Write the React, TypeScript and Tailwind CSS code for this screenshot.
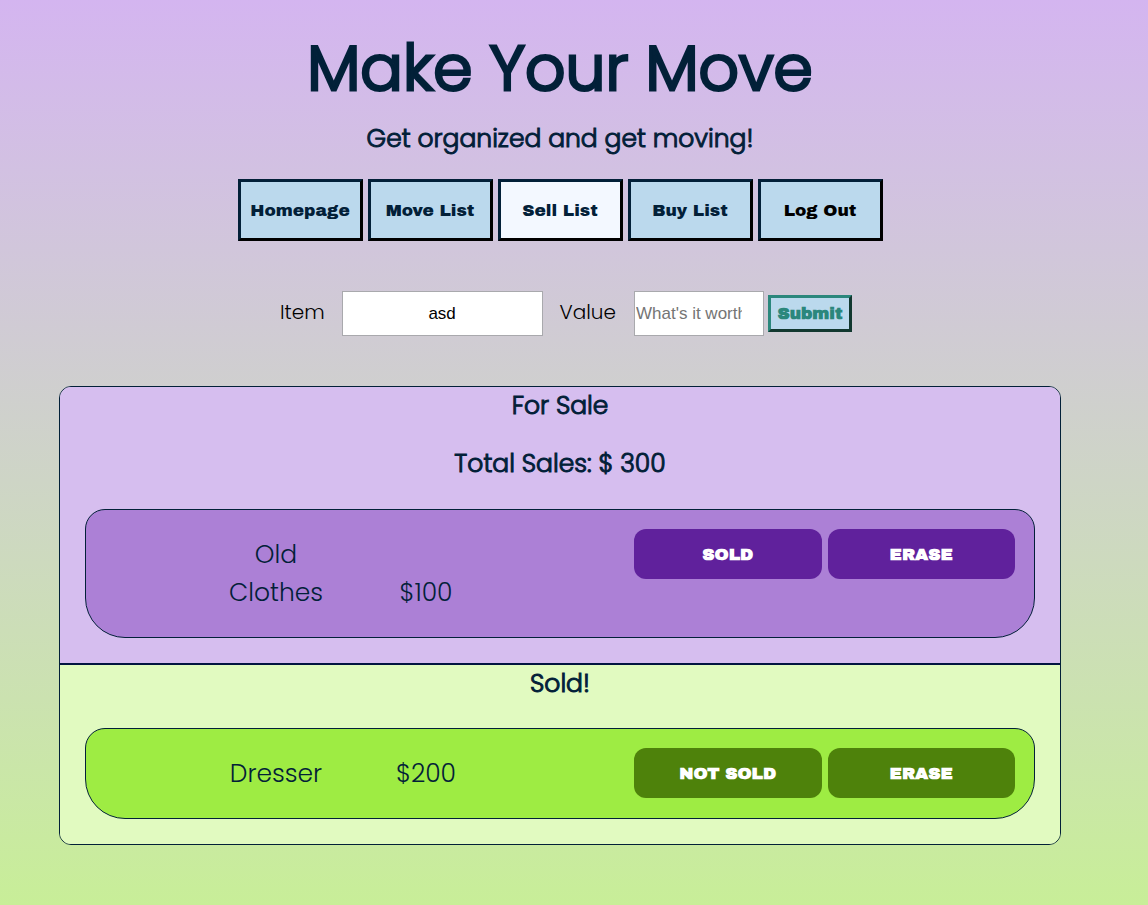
import { useState } from "react";

type Item = { name: string; price: string };

const displayFont = "font-['Poppins','Inter',sans-serif]";
const heavyFont = "font-['Archivo_Black','Inter',sans-serif] text-[17px]";
const subheading = "text-center text-[25px] leading-[38px] font-light [-webkit-text-stroke:1px_#022038]";

const navItems = ["Homepage", "Move List", "Sell List", "Buy List"];

function navClass(active: boolean) {
  return `h-[62px] w-[125px] border-[3px] border-t-[#022038] border-l-[#022038] border-r-black border-b-black pt-0.5 text-center font-normal ${heavyFont} ${
    active ? "bg-[#f3f8ff]" : "bg-[#bbd9ed]"
  }`;
}

function ItemCard({ item, sold }: { item: Item; sold: boolean }) {
  const button = `h-[50px] flex-1 rounded-xl pt-0.5 font-black text-white ${heavyFont} ${
    sold ? "bg-[#4e820b]" : "bg-[#60219c]"
  }`;
  return (
    <li
      className={`flex items-start justify-between rounded-t-[20px] rounded-b-[40px] border border-[#022038] pr-[19px] ${
        sold ? "bg-[#9eec43]" : "bg-[#ac80d6]"
      }`}
    >
      <div className="flex items-end pt-[26px] pb-[25px] pl-[115px] text-center text-[25px] leading-[38px]">
        <span className="w-[150px] px-5">{item.name}</span>
        <span className="w-[150px]">{item.price}</span>
      </div>
      <div className="flex w-[381px] gap-1.5 pt-[19px]">
        <button type="button" className={button}>
          {sold ? "NOT SOLD" : "SOLD"}
        </button>
        <button type="button" className={button}>
          ERASE
        </button>
      </div>
    </li>
  );
}

export default function App() {
  const [name, setName] = useState("asd");
  const [value, setValue] = useState("");

  return (
    <div
      className={`min-h-screen bg-linear-to-b from-[#d4b5f0] to-[#c8ee98] pr-[87px] pb-[60px] pl-[59px] text-[#022038] ${displayFont}`}
    >
      <header className="pt-5 text-center">
        <h1 className="text-[63px] leading-[96px] font-light [-webkit-text-stroke:3px_#022038]">Make Your Move</h1>
        <p className={`mt-1 ${subheading}`}>Get organized and get moving!</p>
      </header>

      <nav className="mt-[21px] flex justify-center gap-[5px]">
        {navItems.map((label) => (
          <button key={label} type="button" className={navClass(label === "Sell List")}>
            {label}
          </button>
        ))}
        <button type="button" className={`${navClass(false)} text-black`}>
          Log Out
        </button>
      </nav>

      <form
        className="mt-[50px] flex items-center justify-center pl-3 text-xl font-light text-black"
        onSubmit={(event) => event.preventDefault()}
      >
        <label htmlFor="item" className="pb-1">
          Item
        </label>
        <input
          id="item"
          value={name}
          onChange={(event) => setName(event.target.value)}
          className="mr-[17px] ml-[17px] h-[45px] w-[201px] border border-[#a9a9ad] bg-white text-center font-['Liberation_Sans',sans-serif] text-[17px] font-normal"
        />
        <label htmlFor="value" className="pb-1">
          Value
        </label>
        <input
          id="value"
          type="number"
          placeholder="What's it worth?"
          value={value}
          onChange={(event) => setValue(event.target.value)}
          className="mr-1 ml-[18px] h-[45px] w-[130px] border border-[#a9a9ad] bg-white pr-1.5 pl-px font-['Liberation_Sans',sans-serif] text-[17px] font-normal placeholder:text-[#757575]"
        />
        <button
          type="submit"
          className={`h-[37px] w-[84px] border-[3px] border-t-[#2b877c] border-r-[#12382f] border-b-[#12382f] border-l-[#2b877c] bg-[#bbd9ed] font-black text-[#2b877c] ${heavyFont}`}
        >
          Submit
        </button>
      </form>

      <main className="mt-[50px] overflow-hidden rounded-xl border border-[#022038]">
        <section className="border-b-2 border-[#021540] bg-[#d6beef] px-[25px] pb-[25px]">
          <h2 className={subheading}>For Sale</h2>
          <p className={`mt-5 mb-[26px] ${subheading}`}>Total Sales: $ 300</p>
          <ul className="font-light">
            <ItemCard item={{ name: "Old Clothes", price: "$100" }} sold={false} />
          </ul>
        </section>
        <section className="bg-[#e1fac0] px-[25px] pb-[25px]">
          <h2 className={`mb-[25px] ${subheading}`}>Sold!</h2>
          <ul className="font-light">
            <ItemCard item={{ name: "Dresser", price: "$200" }} sold />
          </ul>
        </section>
      </main>
    </div>
  );
}
